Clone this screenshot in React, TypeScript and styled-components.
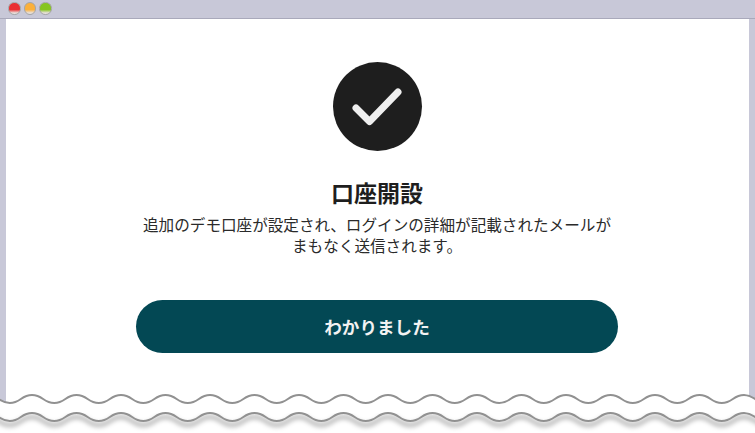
import React from "react";
import styled, { createGlobalStyle } from "styled-components";

const GlobalStyle = createGlobalStyle`
    html, body {
        margin: 0;
        padding: 0;
        background: #fff;
    }
    body {
        font-family: "Noto Sans CJK JP", "Liberation Sans", sans-serif;
    }
`;

const Win = styled.div`
    position: relative;
    width: 755px;
    height: 433px;
    overflow: hidden;
    display: flex;
    flex-direction: column;
    background: #c8c8d8;
`;

const TitleBar = styled.div`
    flex: none;
    height: 19px;
    box-sizing: border-box;
    display: flex;
    align-items: center;
    gap: 3px;
    padding: 0 0 1px 8px;
    background: #c8c8d8;
    border-bottom: 1px solid #a9a9bb;
`;

const Light = styled.span<{ $top: string }>`
    width: 12.5px;
    height: 12.5px;
    border-radius: 50%;
    box-sizing: border-box;
    border: 1px solid #a5a5a5;
    background: linear-gradient(${p => p.$top} 0%, ${p => p.$top} 60%, #e8e0dc 90%);
`;

const Page = styled.main`
    flex: 1;
    margin: 0 6px;
    background: #fff;
    display: flex;
    flex-direction: column;
    align-items: center;
    padding: 43px 1px 0 0;
`;

const Badge = styled.div`
    width: 89px;
    height: 89px;
    border-radius: 50%;
    background: #1e1e1e;
    display: flex;
    align-items: center;
    justify-content: center;
`;

const Title = styled.h1`
    margin: 25px 0 0;
    font-size: 23px;
    line-height: 32px;
    font-weight: 700;
    color: #1e1e1e;
`;

const Message = styled.p`
    margin: 6px 0 0;
    width: 475px;
    font-size: 15.6px;
    line-height: 20.5px;
    text-align: center;
    color: #2a2a2a;
`;

const Action = styled.button`
    margin-top: 45px;
    width: 482px;
    height: 53px;
    border: 0;
    border-radius: 27px;
    background: #034854;
    color: #f2f2f2;
    font-family: inherit;
    font-size: 17.6px;
    font-weight: 700;
`;

const Tear = styled.svg`
    position: absolute;
    left: 0;
    bottom: 0;
    display: block;
`;

const PERIOD = 44.5;

// first crest of the torn edge sits at x=32
const wave = (y: number) => {
    const start = 32 - PERIOD * 1.5;
    const q = PERIOD / 4;
    let d = `M${start} ${y + 4}`;
    for (let x = start; x < 800; x += PERIOD) {
        d += ` C${x + q} ${y + 4} ${x + q} ${y - 4} ${x + 2 * q} ${y - 4}`;
        d += ` C${x + 3 * q} ${y - 4} ${x + 3 * q} ${y + 4} ${x + PERIOD} ${y + 4}`;
    }
    return d;
};

const TornEdge: React.FC = () => (
    <Tear width="755" height="45" viewBox="0 388 755 45">
        <defs>
            <filter id="tearShadow" x="-5%" y="-50%" width="110%" height="250%">
                <feGaussianBlur stdDeviation="2.4" />
            </filter>
        </defs>
        <path d={`${wave(399)} L800 433 L-36 433 Z`} fill="#fff" />
        <path d={wave(399)} fill="none" stroke="#919191" strokeWidth="2" />
        <path d={wave(417)} transform="translate(0 4)" fill="none" stroke="#000" strokeOpacity="0.4" strokeWidth="3" filter="url(#tearShadow)" />
        <path d={wave(417)} fill="none" stroke="#919191" strokeWidth="2" />
    </Tear>
);

const App: React.FC = () => {
    return (
        <Win>
            <GlobalStyle />
            <TitleBar>
                <Light $top="#ea2f33" />
                <Light $top="#fbb03b" />
                <Light $top="#86c51f" />
            </TitleBar>
            <Page>
                <Badge>
                    <svg width="89" height="89" viewBox="0 0 89 89">
                        <path d="M23 46 L36.5 59.5 L65 30" fill="none" stroke="#efefef" strokeWidth="7" strokeLinecap="round" strokeLinejoin="round" />
                    </svg>
                </Badge>
                <Title>口座開設</Title>
                <Message>追加のデモ口座が設定され、ログインの詳細が記載されたメールがまもなく送信されます。</Message>
                <Action>わかりました</Action>
            </Page>
            <TornEdge />
        </Win>
    );
};

export default App;
